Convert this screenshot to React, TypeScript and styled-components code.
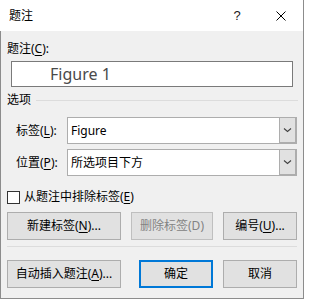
import React from "react";
import styled, { createGlobalStyle } from "styled-components";

const Global = createGlobalStyle`
  html, body { margin: 0; padding: 0; background: #ffffff; }
  body { font-family: "Noto Sans", "Noto Sans CJK SC", sans-serif; }
`;

const UI_FONT = `"Noto Sans", "Noto Sans CJK SC", sans-serif`;

const Window = styled.div`
  width: 304px;
  height: 299px;
  box-sizing: border-box;
  border-right: 1px solid #8c8c8c;
  display: flex;
  flex-direction: column;
  font-family: ${UI_FONT};
  font-size: 12px;
  color: #000;
`;

const TitleBar = styled.div`
  height: 31px;
  flex: none;
  background: #ffffff;
  display: flex;
  align-items: center;
  padding: 0 7px 0 9px;
`;

const TitleText = styled.div`
  font-size: 12px;
  line-height: 16px;
  flex: 1;
`;

const TitleButton = styled.div<{ $gap?: number }>`
  width: 30px;
  height: 20px;
  display: flex;
  align-items: center;
  justify-content: center;
  margin-left: ${(p) => p.$gap ?? 0}px;
  font-family: "Liberation Sans", sans-serif;
  font-size: 13px;
  color: #1a1a1a;
`;

const Body = styled.div`
  flex: 1;
  background: #f0f0f0;
  border-left: 1px solid #8c8c8c;
  border-bottom: 1px solid #8c8c8c;
  padding: 10px 6px 10px 6px;
  display: flex;
  flex-direction: column;
`;

const Label = styled.div<{ $indent?: number }>`
  height: 16px;
  line-height: 16px;
  white-space: nowrap;
  padding-left: ${(p) => p.$indent ?? 0}px;
`;

const Key = styled.u`
  text-decoration-thickness: 1px;
  text-underline-offset: 2px;
`;

const CaptionBox = styled.div`
  margin: 4px 0 0 4px;
  width: 282px;
  height: 26px;
  box-sizing: border-box;
  border: 1px solid #7a7a7a;
  background: #ffffff;
  padding: 1px 0 0 38px;
  font-family: "Noto Sans", sans-serif;
  font-size: 16px;
  line-height: 23px;
  color: #4a4a4a;
`;

const GroupHeader = styled.div`
  margin-top: 5px;
  height: 16px;
  display: flex;
  align-items: center;
  line-height: 16px;
`;

const GroupLine = styled.div`
  flex: 1;
  height: 1px;
  background: #dcdcdc;
  margin-left: 5px;
  margin-right: -1px;
`;

const FieldRow = styled.div<{ $top: number }>`
  margin-top: ${(p) => p.$top}px;
  height: 27px;
  display: grid;
  grid-template-columns: 60px 1fr;
  align-items: center;
`;

const Combo = styled.div`
  height: 27px;
  box-sizing: border-box;
  border: 1px solid #adadad;
  background: #ffffff;
  display: flex;
`;

const ComboValue = styled.div`
  flex: 1;
  padding-left: 3px;
  line-height: 25px;
  white-space: nowrap;
`;

const ComboButton = styled.div`
  width: 17px;
  box-sizing: border-box;
  background: #e1e1e1;
  border-left: 1px solid #adadad;
  border-right: 1px solid #adadad;
  border-bottom: 1px solid #adadad;
  display: flex;
  align-items: center;
  justify-content: center;
`;

const CheckRow = styled.div`
  margin-top: 13px;
  height: 16px;
  display: flex;
  align-items: center;
`;

const CheckBox = styled.div`
  width: 13px;
  height: 13px;
  box-sizing: border-box;
  border: 1px solid #333333;
  background: #ffffff;
  margin-right: 4px;
`;

const ButtonRow = styled.div<{ $top: number }>`
  margin-top: ${(p) => p.$top}px;
  display: flex;
  gap: 10px;
`;

const Button = styled.div<{ $w: number; $disabled?: boolean; $default?: boolean; $push?: boolean }>`
  width: ${(p) => p.$w}px;
  height: 28px;
  box-sizing: border-box;
  background: #e1e1e1;
  border: ${(p) =>
    p.$default ? "2px solid #0078d7" : p.$disabled ? "1px solid #bfbfbf" : "1px solid #adadad"};
  color: ${(p) => (p.$disabled ? "#838383" : "#000")};
  display: flex;
  align-items: center;
  justify-content: center;
  white-space: nowrap;
  line-height: 16px;
  margin-left: ${(p) => (p.$push ? "auto" : "0")};
`;

const Separator = styled.div`
  margin-top: 6px;
  height: 1px;
  background: #dcdcdc;
`;

const Chevron = () => (
  <svg width="9" height="6" viewBox="0 0 9 6">
    <path d="M1 1.5 L4.5 4.5 L8 1.5" fill="none" stroke="#404040" strokeWidth="1.1" />
  </svg>
);

const CloseIcon = () => (
  <svg width="10" height="10" viewBox="0 0 10 10">
    <path d="M0.5 0.5 L9.5 9.5 M9.5 0.5 L0.5 9.5" stroke="#000" strokeWidth="1" />
  </svg>
);

export default function App() {
  return (
    <>
      <Global />
      <Window>
        <TitleBar>
          <TitleText>题注</TitleText>
          <TitleButton>?</TitleButton>
          <TitleButton $gap={14}>
            <CloseIcon />
          </TitleButton>
        </TitleBar>
        <Body>
          <Label>
            题注(<Key>C</Key>):
          </Label>
          <CaptionBox>Figure 1</CaptionBox>
          <GroupHeader>
            选项
            <GroupLine />
          </GroupHeader>
          <FieldRow $top={9}>
            <Label $indent={9}>
              标签(<Key>L</Key>):
            </Label>
            <Combo>
              <ComboValue>Figure</ComboValue>
              <ComboButton>
                <Chevron />
              </ComboButton>
            </Combo>
          </FieldRow>
          <FieldRow $top={5}>
            <Label $indent={9}>
              位置(<Key>P</Key>):
            </Label>
            <Combo>
              <ComboValue>所选项目下方</ComboValue>
              <ComboButton>
                <Chevron />
              </ComboButton>
            </Combo>
          </FieldRow>
          <CheckRow>
            <CheckBox />
            <Label>
              从题注中排除标签(<Key>E</Key>)
            </Label>
          </CheckRow>
          <ButtonRow $top={7}>
            <Button $w={114}>
              新建标签(<Key>N</Key>)...
            </Button>
            <Button $w={82} $disabled>
              删除标签(D)
            </Button>
            <Button $w={74}>
              编号(<Key>U</Key>)...
            </Button>
          </ButtonRow>
          <Separator />
          <ButtonRow $top={13}>
            <Button $w={114}>
              自动插入题注(<Key>A</Key>)...
            </Button>
            <Button $w={74} $default $push>
              确定
            </Button>
            <Button $w={74}>取消</Button>
          </ButtonRow>
        </Body>
      </Window>
    </>
  );
}
